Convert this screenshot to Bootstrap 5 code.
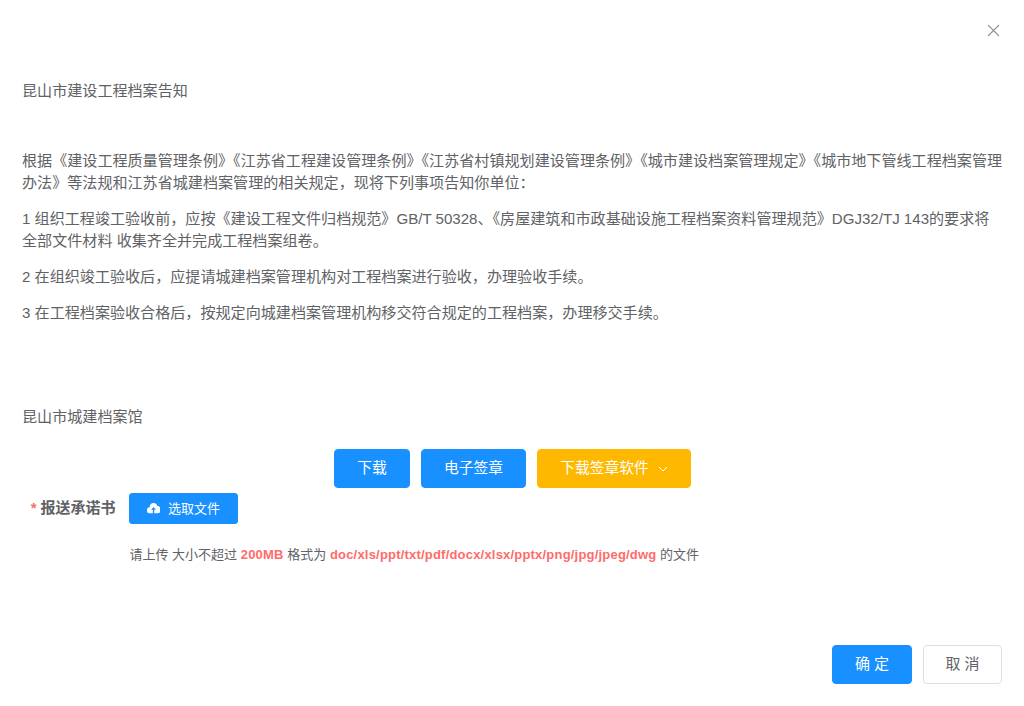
<!DOCTYPE html>
<html lang="zh">
<head>
<meta charset="utf-8">
<title>昆山市建设工程档案告知</title>
<link href="https://cdn.jsdelivr.net/npm/bootstrap@5.3.0/dist/css/bootstrap.min.css" rel="stylesheet">
<style>
html,body{height:100%}
body{font-family:"Liberation Sans","Noto Sans CJK SC",sans-serif;color:#606266;background:#fff;font-size:15.08px;overflow:hidden}
.sheet{height:706px;display:flex;flex-direction:column;padding:0 21px 22px 22px;position:relative}
.closer{position:absolute;top:24px;right:24px;width:13px;height:13px;padding:0;border:0;background:none;display:flex}
.notice-title{margin:0;padding-top:81px;line-height:20px}
.notice-body{padding-top:49px}
.notice-body p{margin:0 0 14px;line-height:22px}
.notice-sign{margin:0;padding-top:69px;line-height:20px}
.dl-row{padding-top:22px;gap:10.5px}
.act{height:39px;padding:0 22.4px;border-radius:4px;font-size:14.75px;border:1px solid #1890ff;background:#1890ff;color:#fff;display:inline-flex;align-items:center;line-height:1}
.act:hover{background:#1890ff;color:#fff;border-color:#1890ff}
.act-amber{background:#ffb800;border-color:#ffb800}
.act-amber:hover{background:#ffb800;border-color:#ffb800}
.caret-mark{margin-left:9px}
.upload-row{padding-top:5px}
.upload-label{width:107px;padding-right:13.5px;text-align:right;font-weight:700;line-height:29px;flex:none;white-space:nowrap;font-size:15px}
.upload-label i{color:#f56c6c;font-style:normal;font-weight:700;margin-right:4px}
.pick{height:31px;width:109px;border-radius:3px;font-size:13px;background:#1890ff;border:1px solid #1890ff;color:#fff;display:inline-flex;align-items:center;justify-content:center;gap:8px;padding:0}
.pick:hover{background:#1890ff;color:#fff;border-color:#1890ff}
.hint{margin:0;padding:22px 0 0 107.5px;font-size:13px;line-height:17px}
.hint b{color:#ff6b6b;letter-spacing:.2px}
.foot{margin-top:auto;gap:11px;padding-right:1px}
.foot-btn{width:80px;height:39px;border-radius:4px;font-size:15px;padding:0;display:inline-flex;align-items:center;justify-content:center}
.foot-ok{background:#1890ff;border:1px solid #1890ff;color:#fff}
.foot-ok:hover{background:#1890ff;color:#fff;border-color:#1890ff}
.foot-no{width:79px;background:#fff;border:1px solid #dcdfe6;color:#606266}
.foot-no:hover{background:#fff;color:#606266;border-color:#dcdfe6}
</style>
</head>
<body>
<main class="sheet">
  <button class="closer" type="button" aria-label="关闭">
    <svg width="13" height="13" viewBox="0 0 13 13" fill="none" stroke="#909399" stroke-width="1.1"><path d="M1 1l11 11M12 1L1 12"/></svg>
  </button>
  <p class="notice-title">昆山市建设工程档案告知</p>
  <div class="notice-body">
    <p>根据《建设工程质量管理条例》《江苏省工程建设管理条例》《江苏省村镇规划建设管理条例》《城市建设档案管理规定》《城市地下管线工程档案管理办法》等法规和江苏省城建档案管理的相关规定，现将下列事项告知你单位：</p>
    <p>1 组织工程竣工验收前，应按《建设工程文件归档规范》GB/T 50328、《房屋建筑和市政基础设施工程档案资料管理规范》DGJ32/TJ 143的要求将全部文件材料 收集齐全并完成工程档案组卷。</p>
    <p>2 在组织竣工验收后，应提请城建档案管理机构对工程档案进行验收，办理验收手续。</p>
    <p>3 在工程档案验收合格后，按规定向城建档案管理机构移交符合规定的工程档案，办理移交手续。</p>
  </div>
  <p class="notice-sign">昆山市城建档案馆</p>
  <div class="dl-row d-flex justify-content-center">
    <button class="btn act" type="button">下载</button>
    <button class="btn act" type="button">电子签章</button>
    <button class="btn act act-amber" type="button">下载签章软件<svg class="caret-mark" width="10" height="6" viewBox="0 0 10 6" fill="none" stroke="#fff" stroke-width="1"><path d="M1 1l4 4 4-4"/></svg></button>
  </div>
  <div class="upload-row d-flex align-items-start">
    <div class="upload-label"><i>*</i>报送承诺书</div>
    <button class="btn pick" type="button">
      <svg width="13" height="11" viewBox="0 0 13 11"><path fill="#fff" d="M6.500 0a3.900 3.900 0 0 1 3.800 3.100A3.100 3.100 0 0 1 10 10.300H7.200V6.800h1.700L6.500 4 4.100 6.800h1.700v3.500H3A3 3 0 0 1 2.700 4.300 3.900 3.900 0 0 1 6.500 0z"/></svg>
      选取文件
    </button>
  </div>
  <p class="hint">请上传 大小不超过 <b>200MB</b> 格式为 <b>doc/xls/ppt/txt/pdf/docx/xlsx/pptx/png/jpg/jpeg/dwg</b> 的文件</p>
  <div class="foot d-flex justify-content-end">
    <button class="btn foot-btn foot-ok" type="button">确 定</button>
    <button class="btn foot-btn foot-no" type="button">取 消</button>
  </div>
</main>
<script src="https://cdn.jsdelivr.net/npm/bootstrap@5.3.0/dist/js/bootstrap.bundle.min.js"></script>
</body>
</html>
